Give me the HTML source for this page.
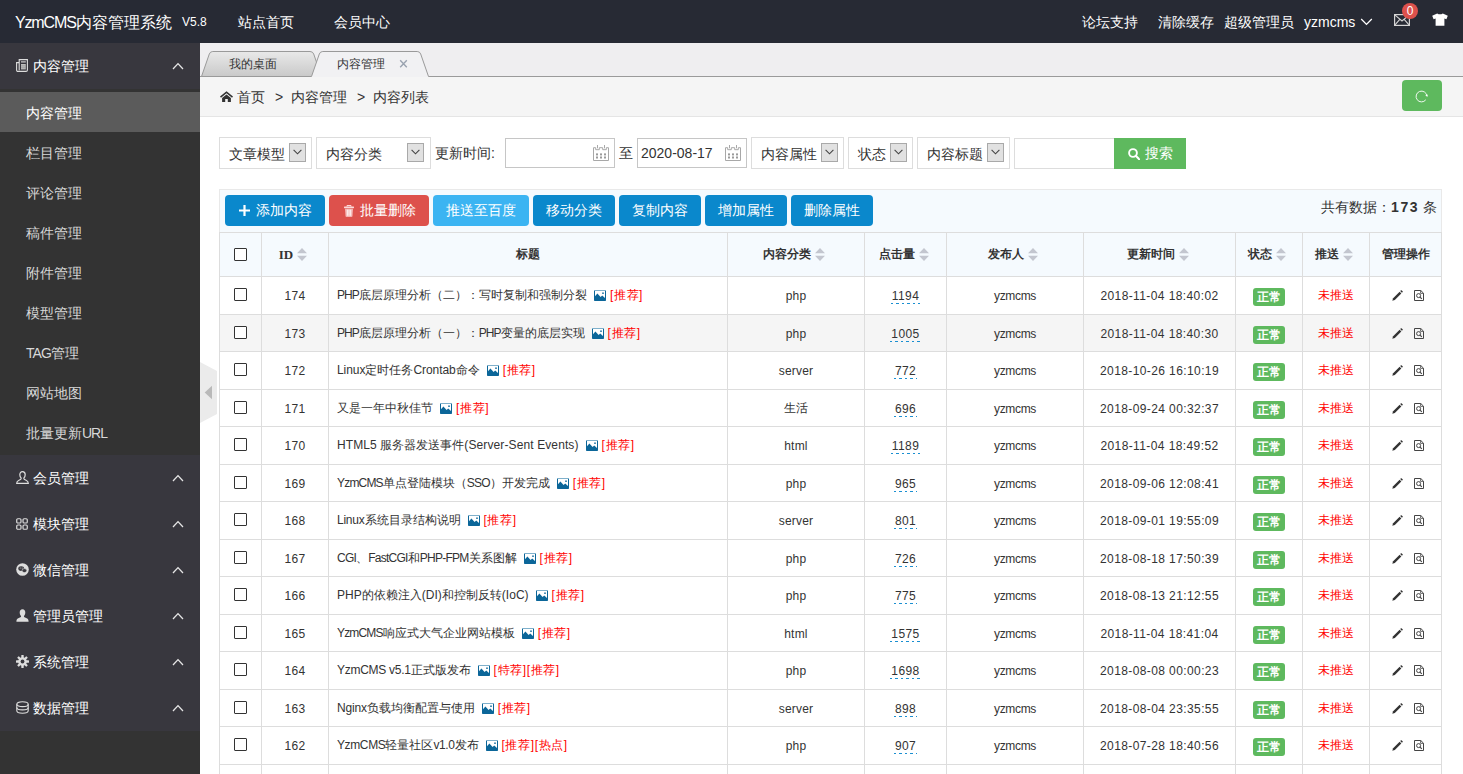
<!DOCTYPE html>
<html lang="zh"><head><meta charset="utf-8"><title>YzmCMS</title>
<style>
*{margin:0;padding:0;box-sizing:border-box}
html,body{width:1463px;height:774px;overflow:hidden;background:#fff;font-family:"Liberation Sans",sans-serif;font-size:14px;color:#333}
.abs{position:absolute}
svg{display:block}
/* header */
#hd{position:absolute;left:0;top:0;width:1463px;height:43px;background:#272a34;color:#fff}
#hd span{position:absolute;white-space:nowrap;line-height:43px;top:1px;font-size:14px}
/* sidebar */
#sb{position:absolute;left:0;top:43px;width:200px;height:731px;background:#333;color:#fff}
.mt{position:absolute;left:0;width:200px;height:46px;background:#38373e;line-height:46px;font-size:14px;color:#fff}
.mt b{position:absolute;left:33px;font-weight:normal}
.mt svg.mi{position:absolute;left:16px;top:16px}
.mt svg.ch{position:absolute;left:172px;top:19px}
.si{position:absolute;left:0;width:200px;height:40px;line-height:42px;padding-left:26px;color:#d8d8d8;font-size:14px}
.si.on{background:#5b5b5b;color:#fff}
/* tabs */
#tabs{position:absolute;left:200px;top:43px;width:1263px;height:34px;background:#efeef0}
#tabs:before{content:"";position:absolute;left:0;top:33px;width:1263px;height:1px;background:#9a9a9a}
#tabs svg{position:absolute;left:0;top:0}
#tabs span{position:absolute;top:9px;line-height:25px;font-size:12px;color:#333;white-space:nowrap}
#bc{position:absolute;left:200px;top:77px;width:1263px;height:40px;background:#f5f5f5;border-bottom:1px solid #e5e5e5}
#bc span{position:absolute;top:0;line-height:40px;font-size:14px;color:#333;white-space:nowrap}
/* filter */
.sel,.inp{position:absolute;top:138px;height:31px;border:1px solid #ddd;background:#fff;font-size:14px;line-height:29px;white-space:nowrap}
.sel i{position:absolute;top:5px;width:17px;height:19px;border:1px solid #a9a9a9;background:#e1e1e1}
.sel i svg{position:absolute;left:3px;top:5px}
.inp{border-color:#c6c6c6}
.sel{top:137px;height:32px;line-height:32px}
.cal{position:absolute;left:87px;top:6px}
.lbl{position:absolute;top:138px;line-height:31px;font-size:14px;color:#333}
/* toolbar */
#tb{position:absolute;left:219px;top:189px;width:1223px;height:44px;background:#f5fafe;border:1px solid #e9e9e9}
.btn{position:absolute;top:195px;height:31px;line-height:31px;border-radius:4px;color:#fff;font-size:14px;text-align:center;white-space:nowrap}
.b1{background:#0a88cc}.b2{background:#dd514c}.b3{background:#3bb4f2}
/* table */
#tbl{position:absolute;left:219px;top:232px;width:1223px;border-top:1px solid #ddd;border-left:1px solid #ddd}
.row,.hrow{display:flex;width:1222px}
.hrow{height:44px;background:#f5fafe;font-weight:bold}
.row{border-bottom:1px solid #ddd;overflow:hidden}
.row .c{height:37px;border-bottom:none}
.row.alt{background:#f5f5f5}
.c{height:100%;border-right:1px solid #ddd;border-bottom:1px solid #ddd;font-size:12px;display:flex;align-items:center;justify-content:center;white-space:nowrap;color:#333;overflow:hidden}
.c1{width:42px}.c2{width:67px}.c3{width:399px;justify-content:flex-start;padding-left:8px}.c4{width:137px}.c5{width:82px}.c6{width:137px}.c7{width:152px}.c8{width:67px}.c9{width:67px}.c10{width:72px}
.hrow .c3{justify-content:center;padding-left:0}
.cb{display:block;margin-top:-2px;width:13px;height:13px;border:1px solid #333;background:#fff;border-radius:1px}
.rd{color:#f00;letter-spacing:.6px}
.c2,.c7{letter-spacing:.4px}
.c6{letter-spacing:-.35px}
.c4{letter-spacing:.2px}
.hrow .c{letter-spacing:0}
.hrow .cb{margin-top:-1px}
.c9 .rd{letter-spacing:0}
.hrow .c2,.hrow .c4,.hrow .c5,.hrow .c6,.hrow .c7,.hrow .c8,.hrow .c9{padding-right:4px}
.pic{width:12px;height:11px;margin:0 4px 0 7px}
.l{letter-spacing:-.55px}
.hit{display:inline-block;line-height:14px;padding:0 1px 1px 1px;margin-top:1px;letter-spacing:.4px;background:repeating-linear-gradient(90deg,#1a8fd1 0,#1a8fd1 2.5px,transparent 2.5px,transparent 5.5px) left bottom/100% 1px no-repeat}
.ok{display:block;margin-top:2px;background:#5eb95e;color:#fff;font-weight:bold;border-radius:3px;width:32px;height:18px;line-height:18px;text-align:center;font-size:12px}
.c10{position:relative}
.ic{position:absolute;top:50%;margin-top:-6px}
.ic.ed{width:11px;height:11px;left:22px}
.ic.vw{width:10px;height:11px;left:43.5px}
.srt{width:10px;height:13px;margin-left:4px}
</style></head><body>
<div id="hd">
<span style="left:15px;font-size:16px"><span style="position:static;font-size:16px;letter-spacing:-1.15px">YzmCMS</span>内容管理系统</span>
<span style="left:182px;font-size:12px">V5.8</span>
<span style="left:238px">站点首页</span>
<span style="left:334px">会员中心</span>
<span style="left:1082px">论坛支持</span>
<span style="left:1158px">清除缓存</span>
<span style="left:1224px">超级管理员</span>
<span style="left:1304px">yzmcms</span>
<svg class="abs" style="left:1360px;top:18px" width="13" height="8" viewBox="0 0 13 8"><path d="M1.2 1 L6.5 6.4 L11.8 1" fill="none" stroke="#fff" stroke-width="1.3"/></svg>
<svg class="abs" style="left:1394px;top:14px" width="16" height="12" viewBox="0 0 16 12"><rect x="0.6" y="0.6" width="14.8" height="10.8" fill="none" stroke="#d5d5d5" stroke-width="1.2"/><path d="M0.8 0.8 L8 7 L15.2 0.8 M0.8 11.2 L5.8 5.4 M15.2 11.2 L10.2 5.4" fill="none" stroke="#d5d5d5" stroke-width="1.1"/></svg>
<div class="abs" style="left:1402px;top:3px;width:16px;height:16px;border-radius:8px;background:#dd514c;color:#fff;font-size:12px;line-height:16px;text-align:center">0</div>
<svg class="abs" style="left:1432px;top:13px" width="16" height="13" viewBox="0 0 16 13"><path d="M5.2 0.4 Q8 2.2 10.8 0.4 L15.8 2.8 L14.4 6.2 L12.4 5.4 V12.8 H3.6 V5.4 L1.6 6.2 L0.2 2.8 Z" fill="#fff"/></svg>
</div>
<div id="sb">
<div class="mt" style="top:0px"><svg class="mi" width="12" height="13" viewBox="0 0 12 13"><path d="M3.2 0.6 H11.4 V11 Q11.4 12.4 10 12.4 H2 Q0.6 12.4 0.6 11 V3.6 H3.2 Z M3.2 3.6 V11.2" fill="none" stroke="#ddd" stroke-width="1.1"/><path d="M5 2.9 H9.8" stroke="#ddd" stroke-width="1.1"/><path d="M5 5 H9.8 V10.4 H5 Z" fill="#bdbdbd"/><path d="M5 6.9 H9.8 M5 8.8 H9.8" stroke="#8a8a8a" stroke-width="0.6"/></svg><b>内容管理</b><svg class="ch" width="12" height="8" viewBox="0 0 12 8"><path d="M1 7 L6 1.6 L11 7" fill="none" stroke="#e6e6e6" stroke-width="1.3"/></svg></div>
<div class="si on" style="top:49px">内容管理</div>
<div class="si" style="top:89px">栏目管理</div>
<div class="si" style="top:129px">评论管理</div>
<div class="si" style="top:169px">稿件管理</div>
<div class="si" style="top:209px">附件管理</div>
<div class="si" style="top:249px">模型管理</div>
<div class="si" style="top:289px"><span style="letter-spacing:-.9px">TAG</span>管理</div>
<div class="si" style="top:329px">网站地图</div>
<div class="si" style="top:369px">批量更新<span style="letter-spacing:-1px">URL</span></div>
<div class="mt" style="top:412px"><svg class="mi" width="13" height="13" viewBox="0 0 13 13"><path d="M6.5 0.7 C8.3 0.7 9.2 2 9.2 3.8 C9.2 5.4 8.4 6.6 7.8 7.2 C7.8 8.4 8.6 8.7 10 9.2 C11.6 9.8 12.3 10.4 12.3 12.3 H0.7 C0.7 10.4 1.4 9.8 3 9.2 C4.4 8.7 5.2 8.4 5.2 7.2 C4.6 6.6 3.8 5.4 3.8 3.8 C3.8 2 4.7 0.7 6.5 0.7 Z" fill="none" stroke="#ddd" stroke-width="1.2"/></svg><b>会员管理</b><svg class="ch" width="12" height="8" viewBox="0 0 12 8"><path d="M1 7 L6 1.6 L11 7" fill="none" stroke="#e6e6e6" stroke-width="1.3"/></svg></div>
<div class="mt" style="top:458px"><svg class="mi" style="top:17px" width="12" height="12" viewBox="0 0 13 13"><g fill="none" stroke="#ddd" stroke-width="1.3"><rect x="0.8" y="0.8" width="4.6" height="4.6" rx="1.2"/><rect x="7.6" y="0.8" width="4.6" height="4.6" rx="1.2"/><rect x="0.8" y="7.6" width="4.6" height="4.6" rx="1.2"/><rect x="7.6" y="7.6" width="4.6" height="4.6" rx="1.2"/></g></svg><b>模块管理</b><svg class="ch" width="12" height="8" viewBox="0 0 12 8"><path d="M1 7 L6 1.6 L11 7" fill="none" stroke="#e6e6e6" stroke-width="1.3"/></svg></div>
<div class="mt" style="top:504px"><svg class="mi" width="13" height="13" viewBox="0 0 13 13"><circle cx="6.5" cy="6.5" r="6.3" fill="#ddd"/><ellipse cx="5.2" cy="5.6" rx="2.9" ry="2.4" fill="#39383e"/><ellipse cx="8.4" cy="7.6" rx="2.4" ry="2" fill="#39383e" stroke="#ddd" stroke-width="0.6"/><circle cx="4.2" cy="5" r="0.5" fill="#ddd"/><circle cx="6.1" cy="5" r="0.5" fill="#ddd"/></svg><b>微信管理</b><svg class="ch" width="12" height="8" viewBox="0 0 12 8"><path d="M1 7 L6 1.6 L11 7" fill="none" stroke="#e6e6e6" stroke-width="1.3"/></svg></div>
<div class="mt" style="top:550px"><svg class="mi" width="13" height="13" viewBox="0 0 13 13"><path d="M6.5 0.3 C8.4 0.3 9.3 1.7 9.3 3.6 C9.3 5.3 8.5 6.5 7.9 7.1 C7.9 8.2 8.7 8.5 10.1 9 C11.9 9.6 12.6 10.3 12.6 12.7 H0.4 C0.4 10.3 1.1 9.6 2.9 9 C4.3 8.5 5.1 8.2 5.1 7.1 C4.5 6.5 3.7 5.3 3.7 3.6 C3.7 1.7 4.6 0.3 6.5 0.3 Z" fill="#ddd"/></svg><b>管理员管理</b><svg class="ch" width="12" height="8" viewBox="0 0 12 8"><path d="M1 7 L6 1.6 L11 7" fill="none" stroke="#e6e6e6" stroke-width="1.3"/></svg></div>
<div class="mt" style="top:596px"><svg class="mi" width="13" height="13" viewBox="0 0 13 13"><g fill="#ddd"><circle cx="6.5" cy="6.5" r="4.3"/><g id="t"><rect x="5.3" y="0" width="2.4" height="13" rx="0.5"/></g><rect x="5.3" y="0" width="2.4" height="13" rx="0.5" transform="rotate(45 6.5 6.5)"/><rect x="5.3" y="0" width="2.4" height="13" rx="0.5" transform="rotate(90 6.5 6.5)"/><rect x="5.3" y="0" width="2.4" height="13" rx="0.5" transform="rotate(135 6.5 6.5)"/></g><circle cx="6.5" cy="6.5" r="1.9" fill="#39383e"/></svg><b>系统管理</b><svg class="ch" width="12" height="8" viewBox="0 0 12 8"><path d="M1 7 L6 1.6 L11 7" fill="none" stroke="#e6e6e6" stroke-width="1.3"/></svg></div>
<div class="mt" style="top:642px"><svg class="mi" width="13" height="13" viewBox="0 0 13 13"><g fill="none" stroke="#ddd" stroke-width="1.1"><ellipse cx="6.5" cy="3.2" rx="5.7" ry="2.4"/><path d="M0.8 3.2 V9.8 C0.8 11.1 3.4 12.2 6.5 12.2 C9.6 12.2 12.2 11.1 12.2 9.8 V3.2"/><path d="M0.8 6.5 C0.8 7.8 3.4 8.9 6.5 8.9 C9.6 8.9 12.2 7.8 12.2 6.5"/></g></svg><b>数据管理</b><svg class="ch" width="12" height="8" viewBox="0 0 12 8"><path d="M1 7 L6 1.6 L11 7" fill="none" stroke="#e6e6e6" stroke-width="1.3"/></svg></div>
</div>
<div id="tabs"><svg width="1263" height="34" viewBox="0 0 1263 34">
<defs><linearGradient id="tg" x1="0" y1="0" x2="0" y2="1"><stop offset="0" stop-color="#e9e9e9"/><stop offset="1" stop-color="#c9c9c9"/></linearGradient></defs>
<path d="M1.5 33.5 L9.3 11 Q10.2 8.5 12.8 8.5 L110 8.5 Q112.8 8.5 113.7 11 L121.5 33.5 Z" fill="url(#tg)" stroke="#9a9a9a" stroke-width="1"/>
<path d="M111.5 33.5 L119.3 11 Q120.2 8.5 122.8 8.5 L217.2 8.5 Q219.8 8.5 220.7 11 L228.5 33.5 L228.5 34 L111.5 34 Z" fill="#f1f1f3" stroke="none"/>
<path d="M111.5 33.5 L119.3 11 Q120.2 8.5 122.8 8.5 L217.2 8.5 Q219.8 8.5 220.7 11 L228.5 33.5" fill="none" stroke="#9a9a9a" stroke-width="1"/>
<path d="M200.2 17.2 L206.8 24.2 M206.8 17.2 L200.2 24.2" stroke="#9aa3b0" stroke-width="1.4"/>
</svg>
<span style="left:29px">我的桌面</span><span style="left:137px">内容管理</span></div>
<div id="bc"><svg class="abs" style="left:20px;top:14px" width="13" height="11" viewBox="0 0 13 11"><path d="M6.5 0.2 L13 5.6 L12 6.7 L6.5 2.2 L1 6.7 L0 5.6 Z" fill="#333"/><path d="M6.5 3.4 L10.9 7 V11 H7.8 V8 H5.2 V11 H2.1 V7 Z" fill="#333"/></svg>
<div class="abs" style="left:1202px;top:3px;width:40px;height:31px;border-radius:4px;background:#5eb95e"><svg class="abs" style="left:13.2px;top:10.3px" width="13" height="13" viewBox="0 0 13 13"><path d="M10.76 9.82 A5.4 5.4 0 1 1 11.88 6.03" fill="none" stroke="#f0f8f0" stroke-width="1"/><path d="M10.3 5.3 L12.7 4.4 L12.4 7.1 Z" fill="#fff"/></svg></div>
<span style="left:37px">首页</span><span style="left:75px">&gt;</span><span style="left:91px">内容管理</span><span style="left:157px">&gt;</span><span style="left:173px">内容列表</span>
</div>
<div class="sel" style="left:219px;width:93px;padding-left:9px">文章模型<i style="left:69px"><svg width="9" height="6" viewBox="0 0 9 6"><path d="M0.6 0.8 L4.5 4.8 L8.4 0.8" fill="none" stroke="#444" stroke-width="1.1"/></svg></i></div>
<div class="sel" style="left:316px;width:115px;padding-left:9px">内容分类<i style="left:90px"><svg width="9" height="6" viewBox="0 0 9 6"><path d="M0.6 0.8 L4.5 4.8 L8.4 0.8" fill="none" stroke="#444" stroke-width="1.1"/></svg></i></div>
<div class="lbl" style="left:435px">更新时间:</div>
<div class="inp" style="left:505px;width:110px;height:30px"><svg class="cal" width="16" height="16" viewBox="0 0 16 16"><path d="M0.5 2.7 H2.7 V4.7 H6.3 V2.7 H9.7 V4.7 H13.3 V2.7 H15.5 V15.5 H0.5 Z M4.5 0 V3.3 M11.5 0 V3.3" fill="none" stroke="#a8a8a8" stroke-width="1"/><g fill="#9a9a9a"><rect x="3" y="8.4" width="2" height="2"/><rect x="7" y="8.4" width="2" height="2"/><rect x="11" y="8.4" width="2" height="2"/><rect x="3" y="11.5" width="2" height="2"/><rect x="7" y="11.5" width="2" height="2"/><rect x="11" y="11.5" width="2" height="2"/></g></svg></div>
<div class="lbl" style="left:619px">至</div>
<div class="inp" style="left:637px;width:110px;height:30px;padding-left:3px;line-height:28px">2020-08-17<svg class="cal" width="16" height="16" viewBox="0 0 16 16"><path d="M0.5 2.7 H2.7 V4.7 H6.3 V2.7 H9.7 V4.7 H13.3 V2.7 H15.5 V15.5 H0.5 Z M4.5 0 V3.3 M11.5 0 V3.3" fill="none" stroke="#a8a8a8" stroke-width="1"/><g fill="#9a9a9a"><rect x="3" y="8.4" width="2" height="2"/><rect x="7" y="8.4" width="2" height="2"/><rect x="11" y="8.4" width="2" height="2"/><rect x="3" y="11.5" width="2" height="2"/><rect x="7" y="11.5" width="2" height="2"/><rect x="11" y="11.5" width="2" height="2"/></g></svg></div>
<div class="sel" style="left:751px;width:93px;padding-left:9px">内容属性<i style="left:69px"><svg width="9" height="6" viewBox="0 0 9 6"><path d="M0.6 0.8 L4.5 4.8 L8.4 0.8" fill="none" stroke="#444" stroke-width="1.1"/></svg></i></div>
<div class="sel" style="left:848px;width:65px;padding-left:9px">状态<i style="left:41px"><svg width="9" height="6" viewBox="0 0 9 6"><path d="M0.6 0.8 L4.5 4.8 L8.4 0.8" fill="none" stroke="#444" stroke-width="1.1"/></svg></i></div>
<div class="sel" style="left:917px;width:93px;padding-left:9px">内容标题<i style="left:69px"><svg width="9" height="6" viewBox="0 0 9 6"><path d="M0.6 0.8 L4.5 4.8 L8.4 0.8" fill="none" stroke="#444" stroke-width="1.1"/></svg></i></div>
<div class="inp" style="left:1014px;width:101px;border-color:#ddd"></div>
<div class="btn" style="left:1114px;top:138px;width:72px;background:#5eb95e;border-radius:0;padding-left:17px"><svg class="abs" style="left:14px;top:10px" width="12" height="12" viewBox="0 0 12 12"><circle cx="5" cy="5" r="3.9" fill="none" stroke="#fff" stroke-width="1.9"/><path d="M7.8 7.8 L11.2 11.2" stroke="#fff" stroke-width="2.1" stroke-linecap="round"/></svg>搜索</div>
<svg class="abs" style="left:200px;top:362px" width="18" height="62" viewBox="0 0 18 62"><path d="M0 0 L17 9 V52 L0 61 Z" fill="#ebebeb"/><path d="M4.7 30.5 L12 23.8 V37.2 Z" fill="#b9b9b9"/></svg>
<div id="tb"></div>
<div class="btn b1" style="left:225px;width:100px;padding-left:18px"><svg class="abs" style="left:14px;top:10px" width="11" height="11" viewBox="0 0 11 11"><path d="M5.5 0 V11 M0 5.5 H11" stroke="#fff" stroke-width="2.2"/></svg>添加内容</div>
<div class="btn b2" style="left:329px;width:100px;padding-left:18px"><svg class="abs" style="left:15px;top:10px" width="10" height="12" viewBox="0 0 10 12"><path d="M3 1.6 V0.5 H7 V1.6" fill="none" stroke="#fbdad9" stroke-width="1"/><rect x="0" y="1.6" width="10" height="1.6" rx="0.4" fill="#fbdad9"/><path d="M1 3.8 H9 L8.5 11 Q8.4 12 7.4 12 H2.6 Q1.6 12 1.5 11 Z" fill="#f4b3b0"/><path d="M3.3 4.6 V10.8 M5 4.6 V10.8 M6.7 4.6 V10.8" stroke="#fff" stroke-width="0.9"/></svg>批量删除</div>
<div class="btn b3" style="left:433px;width:96px">推送至百度</div>
<div class="btn b1" style="left:533px;width:82px">移动分类</div>
<div class="btn b1" style="left:619px;width:82px">复制内容</div>
<div class="btn b1" style="left:705px;width:82px">增加属性</div>
<div class="btn b1" style="left:791px;width:82px">删除属性</div>
<div class="abs" style="left:1321px;top:189px;line-height:36px;font-size:14px;white-space:nowrap">共有数据：<b style="letter-spacing:1.6px;margin-left:0px">173</b> 条</div>
<div id="tbl">
<div class="hrow"><div class="c c1"><span class="cb"></span></div><div class="c c2"><span style="font-family:'Liberation Serif',serif;font-size:13px">ID</span><svg class="srt" viewBox="0 0 10 13"><path d="M5 0 L10 5.2 H0 Z M0 7.8 H10 L5 13 Z" fill="#c3c6cf"/></svg></div><div class="c c3">标题</div><div class="c c4">内容分类<svg class="srt" viewBox="0 0 10 13"><path d="M5 0 L10 5.2 H0 Z M0 7.8 H10 L5 13 Z" fill="#c3c6cf"/></svg></div><div class="c c5">点击量<svg class="srt" viewBox="0 0 10 13"><path d="M5 0 L10 5.2 H0 Z M0 7.8 H10 L5 13 Z" fill="#c3c6cf"/></svg></div><div class="c c6">发布人<svg class="srt" viewBox="0 0 10 13"><path d="M5 0 L10 5.2 H0 Z M0 7.8 H10 L5 13 Z" fill="#c3c6cf"/></svg></div><div class="c c7">更新时间<svg class="srt" viewBox="0 0 10 13"><path d="M5 0 L10 5.2 H0 Z M0 7.8 H10 L5 13 Z" fill="#c3c6cf"/></svg></div><div class="c c8">状态<svg class="srt" viewBox="0 0 10 13"><path d="M5 0 L10 5.2 H0 Z M0 7.8 H10 L5 13 Z" fill="#c3c6cf"/></svg></div><div class="c c9">推送<svg class="srt" viewBox="0 0 10 13"><path d="M5 0 L10 5.2 H0 Z M0 7.8 H10 L5 13 Z" fill="#c3c6cf"/></svg></div><div class="c c10">管理操作</div></div>
<div class="row" style="height:38px"><div class="c c1"><span class="cb"></span></div><div class="c c2">174</div><div class="c c3"><span class="tt"><span style="letter-spacing:-0.9px">PHP</span>底层原理分析（二）：写时复制和强制分裂</span><svg class="pic" viewBox="0 0 12 11"><rect x="0" y="0" width="12" height="11" rx="0.8" fill="#0b6699"/><rect x="0" y="0" width="12" height="1" fill="#7fb0cb"/><rect x="1" y="1" width="10" height="9" fill="#fff"/><path d="M1 10 V6.2 L3.4 3.4 L6.6 6.9 L8.2 5.6 L11 8 V10 Z" fill="#0b6699"/><rect x="8" y="2.4" width="2" height="1.3" rx="0.5" fill="#0b6699"/></svg><span class="rd">[推荐]</span></div><div class="c c4">php</div><div class="c c5"><span class="hit">1194</span></div><div class="c c6">yzmcms</div><div class="c c7">2018-11-04 18:40:02</div><div class="c c8"><span class="ok">正常</span></div><div class="c c9"><span class="rd">未推送</span></div><div class="c c10"><svg class="ic ed" viewBox="0 0 11 11"><path d="M0.3 10.7 L1.1 8.2 L7.6 1.7 L9.3 3.4 L2.8 9.9 Z" fill="#333"/><path d="M8.2 1.1 L9 0.3 Q9.4 0 9.8 0.4 L10.6 1.2 Q11 1.6 10.7 2 L9.9 2.8 Z" fill="#333"/></svg><svg class="ic vw" viewBox="0 0 10 11"><path d="M0.5 0.5 H6.8 L9.5 3.2 V10.5 H0.5 Z" fill="none" stroke="#444" stroke-width="1"/><path d="M6.6 0.7 V3.4 H9.3" fill="none" stroke="#444" stroke-width="0.8"/><circle cx="4.6" cy="5.6" r="2" fill="none" stroke="#444" stroke-width="1"/><path d="M6 7.1 L7.8 8.9" stroke="#444" stroke-width="1.1"/></svg></div></div>
<div class="row alt" style="height:37px"><div class="c c1"><span class="cb"></span></div><div class="c c2">173</div><div class="c c3"><span class="tt"><span style="letter-spacing:-0.96px">PHP</span>底层原理分析（一）：<span style="letter-spacing:-0.96px">PHP</span>变量的底层实现</span><svg class="pic" viewBox="0 0 12 11"><rect x="0" y="0" width="12" height="11" rx="0.8" fill="#0b6699"/><rect x="0" y="0" width="12" height="1" fill="#7fb0cb"/><rect x="1" y="1" width="10" height="9" fill="#fff"/><path d="M1 10 V6.2 L3.4 3.4 L6.6 6.9 L8.2 5.6 L11 8 V10 Z" fill="#0b6699"/><rect x="8" y="2.4" width="2" height="1.3" rx="0.5" fill="#0b6699"/></svg><span class="rd">[推荐]</span></div><div class="c c4">php</div><div class="c c5"><span class="hit">1005</span></div><div class="c c6">yzmcms</div><div class="c c7">2018-11-04 18:40:30</div><div class="c c8"><span class="ok">正常</span></div><div class="c c9"><span class="rd">未推送</span></div><div class="c c10"><svg class="ic ed" viewBox="0 0 11 11"><path d="M0.3 10.7 L1.1 8.2 L7.6 1.7 L9.3 3.4 L2.8 9.9 Z" fill="#333"/><path d="M8.2 1.1 L9 0.3 Q9.4 0 9.8 0.4 L10.6 1.2 Q11 1.6 10.7 2 L9.9 2.8 Z" fill="#333"/></svg><svg class="ic vw" viewBox="0 0 10 11"><path d="M0.5 0.5 H6.8 L9.5 3.2 V10.5 H0.5 Z" fill="none" stroke="#444" stroke-width="1"/><path d="M6.6 0.7 V3.4 H9.3" fill="none" stroke="#444" stroke-width="0.8"/><circle cx="4.6" cy="5.6" r="2" fill="none" stroke="#444" stroke-width="1"/><path d="M6 7.1 L7.8 8.9" stroke="#444" stroke-width="1.1"/></svg></div></div>
<div class="row" style="height:38px"><div class="c c1"><span class="cb"></span></div><div class="c c2">172</div><div class="c c3"><span class="tt"><span style="letter-spacing:-0.06px">Linux</span>定时任务<span style="letter-spacing:-0.06px">Crontab</span>命令</span><svg class="pic" viewBox="0 0 12 11"><rect x="0" y="0" width="12" height="11" rx="0.8" fill="#0b6699"/><rect x="0" y="0" width="12" height="1" fill="#7fb0cb"/><rect x="1" y="1" width="10" height="9" fill="#fff"/><path d="M1 10 V6.2 L3.4 3.4 L6.6 6.9 L8.2 5.6 L11 8 V10 Z" fill="#0b6699"/><rect x="8" y="2.4" width="2" height="1.3" rx="0.5" fill="#0b6699"/></svg><span class="rd">[推荐]</span></div><div class="c c4">server</div><div class="c c5"><span class="hit">772</span></div><div class="c c6">yzmcms</div><div class="c c7">2018-10-26 16:10:19</div><div class="c c8"><span class="ok">正常</span></div><div class="c c9"><span class="rd">未推送</span></div><div class="c c10"><svg class="ic ed" viewBox="0 0 11 11"><path d="M0.3 10.7 L1.1 8.2 L7.6 1.7 L9.3 3.4 L2.8 9.9 Z" fill="#333"/><path d="M8.2 1.1 L9 0.3 Q9.4 0 9.8 0.4 L10.6 1.2 Q11 1.6 10.7 2 L9.9 2.8 Z" fill="#333"/></svg><svg class="ic vw" viewBox="0 0 10 11"><path d="M0.5 0.5 H6.8 L9.5 3.2 V10.5 H0.5 Z" fill="none" stroke="#444" stroke-width="1"/><path d="M6.6 0.7 V3.4 H9.3" fill="none" stroke="#444" stroke-width="0.8"/><circle cx="4.6" cy="5.6" r="2" fill="none" stroke="#444" stroke-width="1"/><path d="M6 7.1 L7.8 8.9" stroke="#444" stroke-width="1.1"/></svg></div></div>
<div class="row" style="height:37px"><div class="c c1"><span class="cb"></span></div><div class="c c2">171</div><div class="c c3"><span class="tt">又是一年中秋佳节</span><svg class="pic" viewBox="0 0 12 11"><rect x="0" y="0" width="12" height="11" rx="0.8" fill="#0b6699"/><rect x="0" y="0" width="12" height="1" fill="#7fb0cb"/><rect x="1" y="1" width="10" height="9" fill="#fff"/><path d="M1 10 V6.2 L3.4 3.4 L6.6 6.9 L8.2 5.6 L11 8 V10 Z" fill="#0b6699"/><rect x="8" y="2.4" width="2" height="1.3" rx="0.5" fill="#0b6699"/></svg><span class="rd">[推荐]</span></div><div class="c c4">生活</div><div class="c c5"><span class="hit">696</span></div><div class="c c6">yzmcms</div><div class="c c7">2018-09-24 00:32:37</div><div class="c c8"><span class="ok">正常</span></div><div class="c c9"><span class="rd">未推送</span></div><div class="c c10"><svg class="ic ed" viewBox="0 0 11 11"><path d="M0.3 10.7 L1.1 8.2 L7.6 1.7 L9.3 3.4 L2.8 9.9 Z" fill="#333"/><path d="M8.2 1.1 L9 0.3 Q9.4 0 9.8 0.4 L10.6 1.2 Q11 1.6 10.7 2 L9.9 2.8 Z" fill="#333"/></svg><svg class="ic vw" viewBox="0 0 10 11"><path d="M0.5 0.5 H6.8 L9.5 3.2 V10.5 H0.5 Z" fill="none" stroke="#444" stroke-width="1"/><path d="M6.6 0.7 V3.4 H9.3" fill="none" stroke="#444" stroke-width="0.8"/><circle cx="4.6" cy="5.6" r="2" fill="none" stroke="#444" stroke-width="1"/><path d="M6 7.1 L7.8 8.9" stroke="#444" stroke-width="1.1"/></svg></div></div>
<div class="row" style="height:38px"><div class="c c1"><span class="cb"></span></div><div class="c c2">170</div><div class="c c3"><span class="tt"><span style="letter-spacing:0.11px">HTML5 </span>服务器发送事件<span style="letter-spacing:0.11px">(Server-Sent Events)</span></span><svg class="pic" viewBox="0 0 12 11"><rect x="0" y="0" width="12" height="11" rx="0.8" fill="#0b6699"/><rect x="0" y="0" width="12" height="1" fill="#7fb0cb"/><rect x="1" y="1" width="10" height="9" fill="#fff"/><path d="M1 10 V6.2 L3.4 3.4 L6.6 6.9 L8.2 5.6 L11 8 V10 Z" fill="#0b6699"/><rect x="8" y="2.4" width="2" height="1.3" rx="0.5" fill="#0b6699"/></svg><span class="rd">[推荐]</span></div><div class="c c4">html</div><div class="c c5"><span class="hit">1189</span></div><div class="c c6">yzmcms</div><div class="c c7">2018-11-04 18:49:52</div><div class="c c8"><span class="ok">正常</span></div><div class="c c9"><span class="rd">未推送</span></div><div class="c c10"><svg class="ic ed" viewBox="0 0 11 11"><path d="M0.3 10.7 L1.1 8.2 L7.6 1.7 L9.3 3.4 L2.8 9.9 Z" fill="#333"/><path d="M8.2 1.1 L9 0.3 Q9.4 0 9.8 0.4 L10.6 1.2 Q11 1.6 10.7 2 L9.9 2.8 Z" fill="#333"/></svg><svg class="ic vw" viewBox="0 0 10 11"><path d="M0.5 0.5 H6.8 L9.5 3.2 V10.5 H0.5 Z" fill="none" stroke="#444" stroke-width="1"/><path d="M6.6 0.7 V3.4 H9.3" fill="none" stroke="#444" stroke-width="0.8"/><circle cx="4.6" cy="5.6" r="2" fill="none" stroke="#444" stroke-width="1"/><path d="M6 7.1 L7.8 8.9" stroke="#444" stroke-width="1.1"/></svg></div></div>
<div class="row" style="height:37px"><div class="c c1"><span class="cb"></span></div><div class="c c2">169</div><div class="c c3"><span class="tt"><span style="letter-spacing:-0.81px">YzmCMS</span>单点登陆模块（<span style="letter-spacing:-0.81px">SSO</span>）开发完成</span><svg class="pic" viewBox="0 0 12 11"><rect x="0" y="0" width="12" height="11" rx="0.8" fill="#0b6699"/><rect x="0" y="0" width="12" height="1" fill="#7fb0cb"/><rect x="1" y="1" width="10" height="9" fill="#fff"/><path d="M1 10 V6.2 L3.4 3.4 L6.6 6.9 L8.2 5.6 L11 8 V10 Z" fill="#0b6699"/><rect x="8" y="2.4" width="2" height="1.3" rx="0.5" fill="#0b6699"/></svg><span class="rd">[推荐]</span></div><div class="c c4">php</div><div class="c c5"><span class="hit">965</span></div><div class="c c6">yzmcms</div><div class="c c7">2018-09-06 12:08:41</div><div class="c c8"><span class="ok">正常</span></div><div class="c c9"><span class="rd">未推送</span></div><div class="c c10"><svg class="ic ed" viewBox="0 0 11 11"><path d="M0.3 10.7 L1.1 8.2 L7.6 1.7 L9.3 3.4 L2.8 9.9 Z" fill="#333"/><path d="M8.2 1.1 L9 0.3 Q9.4 0 9.8 0.4 L10.6 1.2 Q11 1.6 10.7 2 L9.9 2.8 Z" fill="#333"/></svg><svg class="ic vw" viewBox="0 0 10 11"><path d="M0.5 0.5 H6.8 L9.5 3.2 V10.5 H0.5 Z" fill="none" stroke="#444" stroke-width="1"/><path d="M6.6 0.7 V3.4 H9.3" fill="none" stroke="#444" stroke-width="0.8"/><circle cx="4.6" cy="5.6" r="2" fill="none" stroke="#444" stroke-width="1"/><path d="M6 7.1 L7.8 8.9" stroke="#444" stroke-width="1.1"/></svg></div></div>
<div class="row" style="height:38px"><div class="c c1"><span class="cb"></span></div><div class="c c2">168</div><div class="c c3"><span class="tt"><span style="letter-spacing:-0.24px">Linux</span>系统目录结构说明</span><svg class="pic" viewBox="0 0 12 11"><rect x="0" y="0" width="12" height="11" rx="0.8" fill="#0b6699"/><rect x="0" y="0" width="12" height="1" fill="#7fb0cb"/><rect x="1" y="1" width="10" height="9" fill="#fff"/><path d="M1 10 V6.2 L3.4 3.4 L6.6 6.9 L8.2 5.6 L11 8 V10 Z" fill="#0b6699"/><rect x="8" y="2.4" width="2" height="1.3" rx="0.5" fill="#0b6699"/></svg><span class="rd">[推荐]</span></div><div class="c c4">server</div><div class="c c5"><span class="hit">801</span></div><div class="c c6">yzmcms</div><div class="c c7">2018-09-01 19:55:09</div><div class="c c8"><span class="ok">正常</span></div><div class="c c9"><span class="rd">未推送</span></div><div class="c c10"><svg class="ic ed" viewBox="0 0 11 11"><path d="M0.3 10.7 L1.1 8.2 L7.6 1.7 L9.3 3.4 L2.8 9.9 Z" fill="#333"/><path d="M8.2 1.1 L9 0.3 Q9.4 0 9.8 0.4 L10.6 1.2 Q11 1.6 10.7 2 L9.9 2.8 Z" fill="#333"/></svg><svg class="ic vw" viewBox="0 0 10 11"><path d="M0.5 0.5 H6.8 L9.5 3.2 V10.5 H0.5 Z" fill="none" stroke="#444" stroke-width="1"/><path d="M6.6 0.7 V3.4 H9.3" fill="none" stroke="#444" stroke-width="0.8"/><circle cx="4.6" cy="5.6" r="2" fill="none" stroke="#444" stroke-width="1"/><path d="M6 7.1 L7.8 8.9" stroke="#444" stroke-width="1.1"/></svg></div></div>
<div class="row" style="height:37px"><div class="c c1"><span class="cb"></span></div><div class="c c2">167</div><div class="c c3"><span class="tt"><span style="letter-spacing:-0.73px">CGI</span>、<span style="letter-spacing:-0.73px">FastCGI</span>和<span style="letter-spacing:-0.73px">PHP-FPM</span>关系图解</span><svg class="pic" viewBox="0 0 12 11"><rect x="0" y="0" width="12" height="11" rx="0.8" fill="#0b6699"/><rect x="0" y="0" width="12" height="1" fill="#7fb0cb"/><rect x="1" y="1" width="10" height="9" fill="#fff"/><path d="M1 10 V6.2 L3.4 3.4 L6.6 6.9 L8.2 5.6 L11 8 V10 Z" fill="#0b6699"/><rect x="8" y="2.4" width="2" height="1.3" rx="0.5" fill="#0b6699"/></svg><span class="rd">[推荐]</span></div><div class="c c4">php</div><div class="c c5"><span class="hit">726</span></div><div class="c c6">yzmcms</div><div class="c c7">2018-08-18 17:50:39</div><div class="c c8"><span class="ok">正常</span></div><div class="c c9"><span class="rd">未推送</span></div><div class="c c10"><svg class="ic ed" viewBox="0 0 11 11"><path d="M0.3 10.7 L1.1 8.2 L7.6 1.7 L9.3 3.4 L2.8 9.9 Z" fill="#333"/><path d="M8.2 1.1 L9 0.3 Q9.4 0 9.8 0.4 L10.6 1.2 Q11 1.6 10.7 2 L9.9 2.8 Z" fill="#333"/></svg><svg class="ic vw" viewBox="0 0 10 11"><path d="M0.5 0.5 H6.8 L9.5 3.2 V10.5 H0.5 Z" fill="none" stroke="#444" stroke-width="1"/><path d="M6.6 0.7 V3.4 H9.3" fill="none" stroke="#444" stroke-width="0.8"/><circle cx="4.6" cy="5.6" r="2" fill="none" stroke="#444" stroke-width="1"/><path d="M6 7.1 L7.8 8.9" stroke="#444" stroke-width="1.1"/></svg></div></div>
<div class="row" style="height:38px"><div class="c c1"><span class="cb"></span></div><div class="c c2">166</div><div class="c c3"><span class="tt"><span style="letter-spacing:0.02px">PHP</span>的依赖注入<span style="letter-spacing:0.02px">(DI)</span>和控制反转<span style="letter-spacing:0.02px">(IoC)</span></span><svg class="pic" viewBox="0 0 12 11"><rect x="0" y="0" width="12" height="11" rx="0.8" fill="#0b6699"/><rect x="0" y="0" width="12" height="1" fill="#7fb0cb"/><rect x="1" y="1" width="10" height="9" fill="#fff"/><path d="M1 10 V6.2 L3.4 3.4 L6.6 6.9 L8.2 5.6 L11 8 V10 Z" fill="#0b6699"/><rect x="8" y="2.4" width="2" height="1.3" rx="0.5" fill="#0b6699"/></svg><span class="rd">[推荐]</span></div><div class="c c4">php</div><div class="c c5"><span class="hit">775</span></div><div class="c c6">yzmcms</div><div class="c c7">2018-08-13 21:12:55</div><div class="c c8"><span class="ok">正常</span></div><div class="c c9"><span class="rd">未推送</span></div><div class="c c10"><svg class="ic ed" viewBox="0 0 11 11"><path d="M0.3 10.7 L1.1 8.2 L7.6 1.7 L9.3 3.4 L2.8 9.9 Z" fill="#333"/><path d="M8.2 1.1 L9 0.3 Q9.4 0 9.8 0.4 L10.6 1.2 Q11 1.6 10.7 2 L9.9 2.8 Z" fill="#333"/></svg><svg class="ic vw" viewBox="0 0 10 11"><path d="M0.5 0.5 H6.8 L9.5 3.2 V10.5 H0.5 Z" fill="none" stroke="#444" stroke-width="1"/><path d="M6.6 0.7 V3.4 H9.3" fill="none" stroke="#444" stroke-width="0.8"/><circle cx="4.6" cy="5.6" r="2" fill="none" stroke="#444" stroke-width="1"/><path d="M6 7.1 L7.8 8.9" stroke="#444" stroke-width="1.1"/></svg></div></div>
<div class="row" style="height:37px"><div class="c c1"><span class="cb"></span></div><div class="c c2">165</div><div class="c c3"><span class="tt"><span style="letter-spacing:-0.83px">YzmCMS</span>响应式大气企业网站模板</span><svg class="pic" viewBox="0 0 12 11"><rect x="0" y="0" width="12" height="11" rx="0.8" fill="#0b6699"/><rect x="0" y="0" width="12" height="1" fill="#7fb0cb"/><rect x="1" y="1" width="10" height="9" fill="#fff"/><path d="M1 10 V6.2 L3.4 3.4 L6.6 6.9 L8.2 5.6 L11 8 V10 Z" fill="#0b6699"/><rect x="8" y="2.4" width="2" height="1.3" rx="0.5" fill="#0b6699"/></svg><span class="rd">[推荐]</span></div><div class="c c4">html</div><div class="c c5"><span class="hit">1575</span></div><div class="c c6">yzmcms</div><div class="c c7">2018-11-04 18:41:04</div><div class="c c8"><span class="ok">正常</span></div><div class="c c9"><span class="rd">未推送</span></div><div class="c c10"><svg class="ic ed" viewBox="0 0 11 11"><path d="M0.3 10.7 L1.1 8.2 L7.6 1.7 L9.3 3.4 L2.8 9.9 Z" fill="#333"/><path d="M8.2 1.1 L9 0.3 Q9.4 0 9.8 0.4 L10.6 1.2 Q11 1.6 10.7 2 L9.9 2.8 Z" fill="#333"/></svg><svg class="ic vw" viewBox="0 0 10 11"><path d="M0.5 0.5 H6.8 L9.5 3.2 V10.5 H0.5 Z" fill="none" stroke="#444" stroke-width="1"/><path d="M6.6 0.7 V3.4 H9.3" fill="none" stroke="#444" stroke-width="0.8"/><circle cx="4.6" cy="5.6" r="2" fill="none" stroke="#444" stroke-width="1"/><path d="M6 7.1 L7.8 8.9" stroke="#444" stroke-width="1.1"/></svg></div></div>
<div class="row" style="height:38px"><div class="c c1"><span class="cb"></span></div><div class="c c2">164</div><div class="c c3"><span class="tt"><span style="letter-spacing:-0.28px">YzmCMS v5.1</span>正式版发布</span><svg class="pic" viewBox="0 0 12 11"><rect x="0" y="0" width="12" height="11" rx="0.8" fill="#0b6699"/><rect x="0" y="0" width="12" height="1" fill="#7fb0cb"/><rect x="1" y="1" width="10" height="9" fill="#fff"/><path d="M1 10 V6.2 L3.4 3.4 L6.6 6.9 L8.2 5.6 L11 8 V10 Z" fill="#0b6699"/><rect x="8" y="2.4" width="2" height="1.3" rx="0.5" fill="#0b6699"/></svg><span class="rd">[特荐][推荐]</span></div><div class="c c4">php</div><div class="c c5"><span class="hit">1698</span></div><div class="c c6">yzmcms</div><div class="c c7">2018-08-08 00:00:23</div><div class="c c8"><span class="ok">正常</span></div><div class="c c9"><span class="rd">未推送</span></div><div class="c c10"><svg class="ic ed" viewBox="0 0 11 11"><path d="M0.3 10.7 L1.1 8.2 L7.6 1.7 L9.3 3.4 L2.8 9.9 Z" fill="#333"/><path d="M8.2 1.1 L9 0.3 Q9.4 0 9.8 0.4 L10.6 1.2 Q11 1.6 10.7 2 L9.9 2.8 Z" fill="#333"/></svg><svg class="ic vw" viewBox="0 0 10 11"><path d="M0.5 0.5 H6.8 L9.5 3.2 V10.5 H0.5 Z" fill="none" stroke="#444" stroke-width="1"/><path d="M6.6 0.7 V3.4 H9.3" fill="none" stroke="#444" stroke-width="0.8"/><circle cx="4.6" cy="5.6" r="2" fill="none" stroke="#444" stroke-width="1"/><path d="M6 7.1 L7.8 8.9" stroke="#444" stroke-width="1.1"/></svg></div></div>
<div class="row" style="height:37px"><div class="c c1"><span class="cb"></span></div><div class="c c2">163</div><div class="c c3"><span class="tt"><span style="letter-spacing:-0.2px">Nginx</span>负载均衡配置与使用</span><svg class="pic" viewBox="0 0 12 11"><rect x="0" y="0" width="12" height="11" rx="0.8" fill="#0b6699"/><rect x="0" y="0" width="12" height="1" fill="#7fb0cb"/><rect x="1" y="1" width="10" height="9" fill="#fff"/><path d="M1 10 V6.2 L3.4 3.4 L6.6 6.9 L8.2 5.6 L11 8 V10 Z" fill="#0b6699"/><rect x="8" y="2.4" width="2" height="1.3" rx="0.5" fill="#0b6699"/></svg><span class="rd">[推荐]</span></div><div class="c c4">server</div><div class="c c5"><span class="hit">898</span></div><div class="c c6">yzmcms</div><div class="c c7">2018-08-04 23:35:55</div><div class="c c8"><span class="ok">正常</span></div><div class="c c9"><span class="rd">未推送</span></div><div class="c c10"><svg class="ic ed" viewBox="0 0 11 11"><path d="M0.3 10.7 L1.1 8.2 L7.6 1.7 L9.3 3.4 L2.8 9.9 Z" fill="#333"/><path d="M8.2 1.1 L9 0.3 Q9.4 0 9.8 0.4 L10.6 1.2 Q11 1.6 10.7 2 L9.9 2.8 Z" fill="#333"/></svg><svg class="ic vw" viewBox="0 0 10 11"><path d="M0.5 0.5 H6.8 L9.5 3.2 V10.5 H0.5 Z" fill="none" stroke="#444" stroke-width="1"/><path d="M6.6 0.7 V3.4 H9.3" fill="none" stroke="#444" stroke-width="0.8"/><circle cx="4.6" cy="5.6" r="2" fill="none" stroke="#444" stroke-width="1"/><path d="M6 7.1 L7.8 8.9" stroke="#444" stroke-width="1.1"/></svg></div></div>
<div class="row" style="height:38px"><div class="c c1"><span class="cb"></span></div><div class="c c2">162</div><div class="c c3"><span class="tt"><span style="letter-spacing:-0.38px">YzmCMS</span>轻量社区<span style="letter-spacing:-0.38px">v1.0</span>发布</span><svg class="pic" viewBox="0 0 12 11"><rect x="0" y="0" width="12" height="11" rx="0.8" fill="#0b6699"/><rect x="0" y="0" width="12" height="1" fill="#7fb0cb"/><rect x="1" y="1" width="10" height="9" fill="#fff"/><path d="M1 10 V6.2 L3.4 3.4 L6.6 6.9 L8.2 5.6 L11 8 V10 Z" fill="#0b6699"/><rect x="8" y="2.4" width="2" height="1.3" rx="0.5" fill="#0b6699"/></svg><span class="rd">[推荐][热点]</span></div><div class="c c4">php</div><div class="c c5"><span class="hit">907</span></div><div class="c c6">yzmcms</div><div class="c c7">2018-07-28 18:40:56</div><div class="c c8"><span class="ok">正常</span></div><div class="c c9"><span class="rd">未推送</span></div><div class="c c10"><svg class="ic ed" viewBox="0 0 11 11"><path d="M0.3 10.7 L1.1 8.2 L7.6 1.7 L9.3 3.4 L2.8 9.9 Z" fill="#333"/><path d="M8.2 1.1 L9 0.3 Q9.4 0 9.8 0.4 L10.6 1.2 Q11 1.6 10.7 2 L9.9 2.8 Z" fill="#333"/></svg><svg class="ic vw" viewBox="0 0 10 11"><path d="M0.5 0.5 H6.8 L9.5 3.2 V10.5 H0.5 Z" fill="none" stroke="#444" stroke-width="1"/><path d="M6.6 0.7 V3.4 H9.3" fill="none" stroke="#444" stroke-width="0.8"/><circle cx="4.6" cy="5.6" r="2" fill="none" stroke="#444" stroke-width="1"/><path d="M6 7.1 L7.8 8.9" stroke="#444" stroke-width="1.1"/></svg></div></div>
<div class="row" style="height:38px"><div class="c c1"><span class="cb"></span></div><div class="c c2"></div><div class="c c3"></div><div class="c c4"></div><div class="c c5"></div><div class="c c6"></div><div class="c c7"></div><div class="c c8"></div><div class="c c9"></div><div class="c c10"></div></div>
</div>
</body></html>
